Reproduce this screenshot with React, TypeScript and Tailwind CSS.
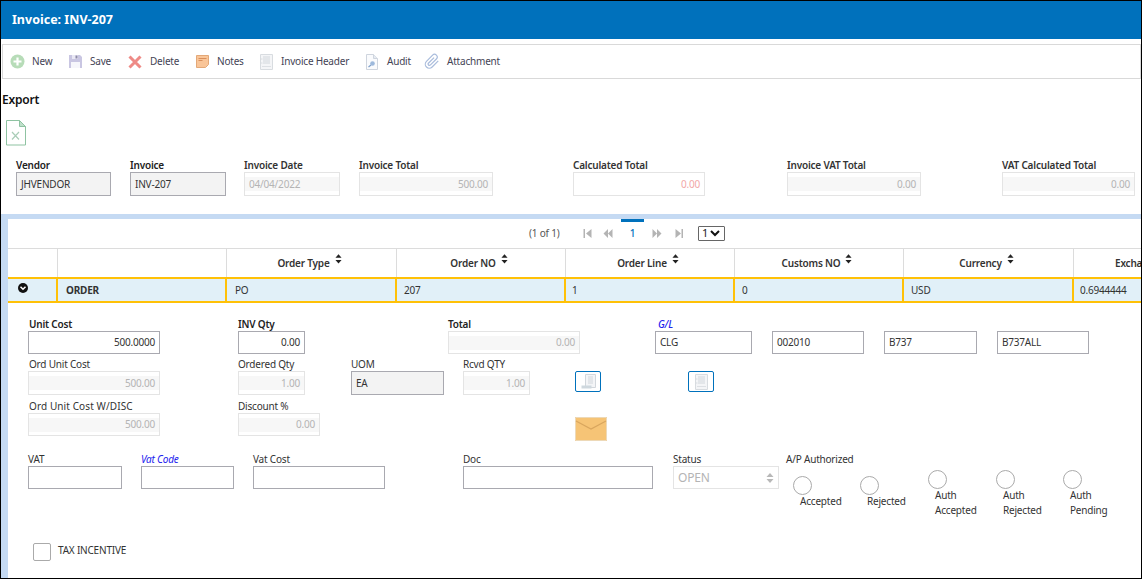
import React from "react";

const font = { fontFamily: '"Noto Sans", "Liberation Sans", sans-serif' };

type Kind = "edit" | "readonly" | "disabled";

function Box({ value, kind, right, pink, tall }: { value?: string; kind: Kind; right?: boolean; pink?: boolean; tall?: boolean }) {
  const align = right ? "justify-end" : "justify-start";
  const h = tall ? "h-[24px]" : "h-[23px]";
  if (kind === "disabled") {
    return (
      <div className={`${h} border border-[#e4e4e4] bg-white flex items-center text-[10px] font-normal`}>
        <div className={`w-full h-[14px] flex items-center px-[4px] ${pink ? "bg-white text-[#f2a7a7]" : "bg-[#f7f7f7] text-[#b4b4b4]"} ${align}`}>{value}</div>
      </div>
    );
  }
  return (
    <div className={`${h} border border-[#a9a9b0] flex items-center px-[4px] text-[10px] font-normal text-[#333] ${kind === "readonly" ? "bg-[#f3f3f3]" : "bg-white"} ${align}`}>
      {value}
    </div>
  );
}

function Field({ label, value, kind = "edit", right, cls, labelCls, pink, tall }: { label?: string; value?: string; kind?: Kind; right?: boolean; cls: string; labelCls?: string; pink?: boolean; tall?: boolean }) {
  return (
    <div className={`shrink-0 ${cls}`}>
      <div className={`h-[14px] leading-[14px] text-[10px] whitespace-nowrap ${labelCls ?? "text-[#333]"}`}>{label ?? "\u00a0"}</div>
      <Box value={value} kind={kind} right={right} pink={pink} tall={tall} />
    </div>
  );
}

function Tool({ icon, label, cls }: { icon: React.ReactNode; label: string; cls: string }) {
  return (
    <div className={`flex items-center shrink-0 ${cls}`}>
      <div className="w-[16px] h-[16px] flex items-center justify-center">{icon}</div>
      <span className="text-[#445] text-[10px] whitespace-nowrap ml-[7px]">{label}</span>
    </div>
  );
}

const Sort = () => (
  <svg width="7" height="10" viewBox="0 0 8 11" className="ml-[5px] mb-[9px]"><path d="M4 0l3.500 4H.5zM4 10.500l3.500-4H.5z" fill="#222" /></svg>
);

function Head({ label, cls }: { label?: string; cls: string }) {
  return (
    <div className={`h-full shrink-0 border-r border-[#dcdcdc] flex items-center justify-center pr-[4px] font-semibold text-[10px] text-[#333] whitespace-nowrap ${cls}`}>
      {label}{label && <Sort />}
    </div>
  );
}

function Cell({ children, cls }: { children?: React.ReactNode; cls: string }) {
  return <div className={`h-full shrink-0 border-r-2 border-[#ffc107] flex items-center text-[10px] text-[#333] whitespace-nowrap ${cls}`}>{children}</div>;
}

function Radio({ lines, cls }: { lines: string[]; cls: string }) {
  return (
    <div className={`shrink-0 ${cls}`}>
      <div className="w-[19px] h-[19px] rounded-full border border-[#aaa] bg-white" />
      <div className="leading-[15px] text-[#333] ml-[7px] -mt-[1px]">
        {lines.map((l) => <div key={l}>{l}</div>)}
      </div>
    </div>
  );
}

const IconNew = () => (
  <svg width="15" height="15" viewBox="0 0 15 15"><circle cx="7.500" cy="7.500" r="7" fill="#b7dcb8" /><path d="M7.500 3.500v8M3.500 7.500h8" stroke="#fff" strokeWidth="2.200" /></svg>
);
const IconSave = () => (
  <svg width="15" height="15" viewBox="0 0 15 15"><path d="M1 1h11l2 2v11H1z" fill="#c9c6e2" /><path d="M4 1h6v4H4z" fill="#e9e8f4" /><path d="M7.500 1.500h2v3h-2z" fill="#8d8aa8" /><path d="M3 8h9v6H3z" fill="#f6f6fb" /></svg>
);
const IconDelete = () => (
  <svg width="14" height="14" viewBox="0 0 14 14"><path d="M1.500 1.500l11 11M12.500 1.500l-11 11" stroke="#ee8a86" strokeWidth="3" /></svg>
);
const IconNotes = () => (
  <svg width="13" height="13" viewBox="0 0 13 13"><path d="M.5.500h12v9l-3 3h-9z" fill="#f9c598" stroke="#e3a878" /><path d="M2.500 3.500h8M2.500 5.500h4" stroke="#d98f5c" /></svg>
);
const IconReceipt = () => (
  <svg width="13" height="16" viewBox="0 0 13 16"><path d="M.5.500h12v15H.5z" fill="#f4f5f7" stroke="#d8dce0" /><path d="M3 3h7M3 5h7M3 7h7M3 9h7" stroke="#d2d7dc" /><path d="M2 12.500h9" stroke="#dde0e4" /><path d="M.5 5h2M.5 9h2" stroke="#d8dce0" /></svg>
);
const IconAudit = () => (
  <svg width="12" height="16" viewBox="0 0 12 16"><path d="M.5.500h7l4 4v11H.5z" fill="#fafbfd" stroke="#cfd5de" /><path d="M7.500.500v4h4" fill="#e6ebf2" stroke="#cfd5de" /><circle cx="6.500" cy="9.500" r="2.300" fill="#9db9dc" /><path d="M5 11l-2.500 2" stroke="#7f9fcb" strokeWidth="1.300" /></svg>
);
const IconClip = () => (
  <svg width="16" height="17" viewBox="0 0 24 24" fill="none" stroke="#a9bcdc" strokeWidth="1.800"><path d="M21.400 11l-9.200 9.200a6 6 0 0 1-8.500-8.500l9.200-9.200a4 4 0 0 1 5.700 5.700l-9.200 9.200a2 2 0 0 1-2.800-2.800l8.500-8.500" /></svg>
);
const IconExcel = () => (
  <svg width="20" height="26" viewBox="0 0 20 26"><path d="M.5.500h13l6 6v18.500H.5z" fill="#fff" stroke="#8fc3a2" /><path d="M13.500.500v6h6z" fill="#bfe0cb" stroke="#8fc3a2" /><path d="M6 12l7 7.500M13 12l-7 7.500" stroke="#a9cdb7" strokeWidth="1.200" /></svg>
);
const IconScroll = () => (
  <svg width="15" height="16" viewBox="0 0 15 16"><path d="M4.500.500h10v13h-10z" fill="#f4f5f7" stroke="#d2d7dc" /><path d="M7 3h5M7 5h5M7 7h5M7 9h5" stroke="#d2d7dc" /><path d="M.5 11.500h10v3h-10z" fill="#cfd8de" /></svg>
);

function Pg({ d, cls }: { d: string; cls: string }) {
  return <div className={`shrink-0 ${cls}`}><svg width="10" height="9" viewBox="0 0 9 9" className="block"><path d={d} fill="#b4b4b4" /></svg></div>;
}

export default function App() {
  return (
    <div style={font} className="w-[1142px] h-[579px] box-border border border-black bg-white overflow-hidden flex flex-col tracking-[-0.2px]">
      <div className="h-[38px] shrink-0 bg-[#0071bc] flex items-center pl-[11px] text-white font-bold text-[12.500px] tracking-normal">Invoice: INV-207</div>

      <div className="mt-[5px] ml-[1px] h-[35px] shrink-0 border border-[#d9d9d9] flex items-center pl-[6px]">
        <Tool cls="w-[58px]" icon={<IconNew />} label="New" />
        <Tool cls="w-[60px]" icon={<IconSave />} label="Save" />
        <Tool cls="w-[67px]" icon={<IconDelete />} label="Delete" />
        <Tool cls="w-[64px]" icon={<IconNotes />} label="Notes" />
        <Tool cls="w-[106px]" icon={<IconReceipt />} label="Invoice Header" />
        <Tool cls="w-[60px]" icon={<IconAudit />} label="Audit" />
        <Tool cls="w-[90px]" icon={<IconClip />} label="Attachment" />
      </div>

      <div className="mt-[13px] ml-[1px] h-[16px] leading-[16px] shrink-0 font-semibold text-[12px] text-[#111]">Export</div>
      <div className="mt-[12px] ml-[5px] h-[26px] shrink-0"><IconExcel /></div>

      <div className="mt-[12px] pl-[15px] flex shrink-0 font-semibold">
        <Field tall cls="w-[95px]" label="Vendor" value="JHVENDOR" kind="readonly" labelCls="text-[#222]" />
        <Field tall cls="w-[96px] ml-[19px]" label="Invoice" value="INV-207" kind="readonly" labelCls="text-[#222]" />
        <Field tall cls="w-[96px] ml-[18px]" label="Invoice Date" value="04/04/2022" kind="disabled" labelCls="text-[#333]" />
        <Field tall cls="w-[134px] ml-[19px]" label="Invoice Total" value="500.00" kind="disabled" right labelCls="text-[#333]" />
        <Field tall cls="w-[132px] ml-[80px]" label="Calculated Total" value="0.00" kind="disabled" right pink labelCls="text-[#333]" />
        <Field tall cls="w-[134px] ml-[82px]" label="Invoice VAT Total" value="0.00" kind="disabled" right labelCls="text-[#333]" />
        <Field tall cls="w-[133px] ml-[81px]" label="VAT Calculated Total" value="0.00" kind="disabled" right labelCls="text-[#333]" />
      </div>

      <div className="mt-[18px] flex-1 min-h-0 border-t-[5px] border-l-[7px] border-[#c5daf3] flex flex-col">
        <div className="h-[29px] shrink-0 flex items-center text-[10px] text-[#555] pl-[521px]">
          <span className="whitespace-nowrap w-[54px] shrink-0">(1 of 1)</span>
          <Pg cls="w-[20px]" d="M0 0h1.500v9H0zM8 0v9L2.500 4.500z" />
          <Pg cls="w-[18px]" d="M4.500 0v9L0 4.500zM9 0v9L4.500 4.500z" />
          <div className="relative w-[23px] h-[29px] shrink-0 flex items-center justify-center text-[#0071bc] font-medium">
            <div className="absolute top-0 left-0 w-[23px] h-[3px] bg-[#0071bc]" />
            1
          </div>
          <Pg cls="w-[22px] ml-[8px]" d="M0 0v9l4.500-4.500zM4.500 0v9L9 4.500z" />
          <Pg cls="w-[24px]" d="M1 0v9l5.500-4.500zM7 0h1.500v9H7z" />
          <div className="w-[27px] h-[15px] border border-[#666] rounded-[1px] flex items-center pl-[3px] text-[#222] text-[11px]">
            1
            <svg width="10" height="7" viewBox="0 0 10 7" className="ml-[2px]"><path d="M1 1l4 4 4-4" fill="none" stroke="#111" strokeWidth="2" /></svg>
          </div>
        </div>

        <div className="h-[29px] shrink-0 border-t border-[#dcdcdc] flex overflow-hidden">
          <Head cls="w-[50px]" />
          <Head cls="w-[169px]" />
          <Head cls="w-[170px]" label="Order Type" />
          <Head cls="w-[169px]" label="Order NO" />
          <Head cls="w-[169px]" label="Order Line" />
          <Head cls="w-[169px]" label="Customs NO" />
          <Head cls="w-[170px]" label="Currency" />
          <div className="h-full shrink-0 w-[120px] flex items-center pl-[41px] font-semibold text-[10px] text-[#333]">Exchange</div>
        </div>

        <div className="h-[26px] shrink-0 border-y-2 border-[#ffc107] bg-[#e1f0f8] flex overflow-hidden">
          <Cell cls="w-[50px] pl-[10px] pb-[4px]">
            <svg width="10" height="10" viewBox="0 0 10 10"><circle cx="5" cy="5" r="5" fill="#111" /><path d="M2.500 3.800L5 6.300l2.500-2.500" fill="none" stroke="#fff" strokeWidth="1.500" /></svg>
          </Cell>
          <Cell cls="w-[169px] pl-[8px] font-bold">ORDER</Cell>
          <Cell cls="w-[170px] pl-[8px]">PO</Cell>
          <Cell cls="w-[169px] pl-[7px]">207</Cell>
          <Cell cls="w-[169px] pl-[6px]">1</Cell>
          <Cell cls="w-[169px] pl-[7px]">0</Cell>
          <Cell cls="w-[170px] pl-[7px]">USD</Cell>
          <div className="flex items-center pl-[6px] text-[10px] text-[#333]">0.6944444</div>
        </div>

        <div className="flex-1 min-h-0 flex flex-col pl-[20px] text-[10px]">
          <div className="flex mt-[14px] shrink-0">
            <Field cls="w-[132px]" label="Unit Cost" value="500.0000" right labelCls="font-semibold text-[#222] pl-[1px]" />
            <Field cls="w-[67px] ml-[78px]" label="INV Qty" value="0.00" right labelCls="font-semibold text-[#222]" />
            <Field cls="w-[132px] ml-[143px]" label="Total" value="0.00" kind="disabled" right labelCls="font-semibold text-[#222]" />
            <Field cls="w-[97px] ml-[75px]" label="G/L" value="CLG" labelCls="italic font-medium text-[#2222ee] pl-[3px]" />
            <Field cls="w-[92px] ml-[20px]" value="002010" />
            <Field cls="w-[93px] ml-[20px]" value="B737" />
            <Field cls="w-[92px] ml-[20px]" value="B737ALL" />
          </div>

          <div className="flex mt-[3px] shrink-0">
            <Field tall cls="w-[132px]" label="Ord Unit Cost" value="500.00" kind="disabled" right labelCls="text-[#333] pl-[1px]" />
            <Field tall cls="w-[67px] ml-[78px]" label="Ordered Qty" value="1.00" kind="disabled" right />
            <Field tall cls="w-[93px] ml-[46px]" label="UOM" value="EA" kind="readonly" />
            <Field tall cls="w-[67px] ml-[19px]" label="Rcvd QTY" value="1.00" kind="disabled" right />
            <div className="ml-[45px] mt-[14px] w-[26px] h-[21px] shrink-0 border border-[#0071bc] rounded-[2px] flex items-center justify-center"><IconScroll /></div>
            <div className="ml-[87px] mt-[14px] w-[26px] h-[21px] shrink-0 border border-[#0071bc] rounded-[2px] flex items-center justify-center"><IconReceipt /></div>
          </div>

          <div className="flex mt-[4px] shrink-0">
            <Field cls="w-[132px]" label="Ord Unit Cost W/DISC" value="500.00" kind="disabled" right labelCls="text-[#333] pl-[1px] tracking-[0.1px]" />
            <Field cls="w-[82px] ml-[78px]" label="Discount %" value="0.00" kind="disabled" right />
            <div className="ml-[255px] mt-[18px] shrink-0">
              <svg width="32" height="24" viewBox="0 0 32 24" className="block"><rect width="32" height="24" fill="#f6c476" /><path d="M.5.500h31v23H.5z" fill="none" stroke="#edd9b8" /><path d="M1 4l15 8 15-8" fill="none" stroke="#d9a65e" strokeWidth="1.200" /></svg>
            </div>
          </div>

          <div className="flex mt-[11px] shrink-0 items-start">
            <Field cls="w-[94px]" label="VAT" />
            <Field cls="w-[93px] ml-[19px]" label="Vat Code" labelCls="italic text-[#2222ee]" />
            <Field cls="w-[132px] ml-[19px]" label="Vat Cost" />
            <Field cls="w-[190px] ml-[78px]" label="Doc" />
            <div className="w-[106px] ml-[20px] shrink-0">
              <div className="h-[14px] leading-[14px] text-[#333]">Status</div>
              <div className="h-[23px] border border-[#e4e4e4] flex items-center justify-between px-[4px] text-[#b4b4b4] text-[12px]">
                OPEN
                <svg width="8" height="12" viewBox="0 0 8 12"><path d="M4 1l3.500 4H.5zM4 11l3.500-4H.5z" fill="#b8b8b8" /></svg>
              </div>
            </div>
            <div className="ml-[7px] shrink-0">
              <div className="h-[14px] leading-[14px] text-[#333] whitespace-nowrap">A/P Authorized</div>
              <div className="flex mt-[4px] pl-[7px]">
                <Radio cls="w-[67px] pt-[6px]" lines={["Accepted"]} />
                <Radio cls="w-[68px] pt-[6px]" lines={["Rejected"]} />
                <Radio cls="w-[68px]" lines={["Auth", "Accepted"]} />
                <Radio cls="w-[67px]" lines={["Auth", "Rejected"]} />
                <Radio cls="w-[67px]" lines={["Auth", "Pending"]} />
              </div>
            </div>
          </div>

          <div className="flex items-center ml-[5px] mt-[25px] shrink-0">
            <div className="w-[18px] h-[18px] border border-[#aaa] rounded-[2px]" />
            <span className="ml-[7px] text-[#333] pb-[3px]">TAX INCENTIVE</span>
          </div>
        </div>
      </div>
    </div>
  );
}
